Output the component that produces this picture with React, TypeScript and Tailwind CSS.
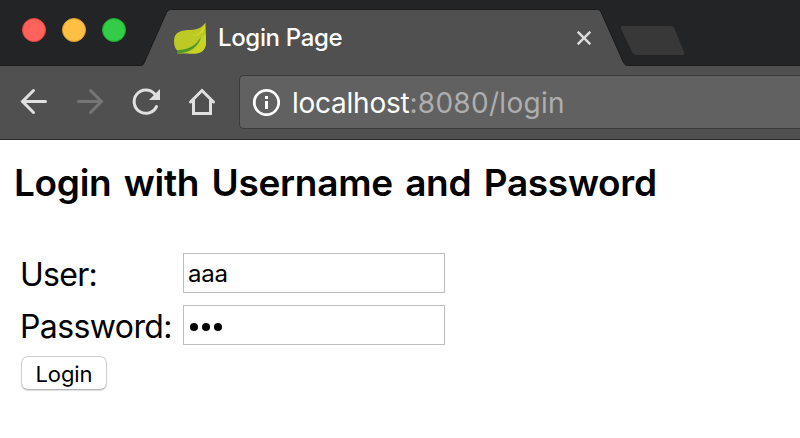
import React from "react";

function TabShape() {
  return (
    <svg className="absolute left-[136px] top-0 h-[67px] w-[500px]" viewBox="136 0 500 67" fill="none">
      <path d="M136 67V65.5H141Q143 65.5 144 63L166.5 12.500Q168 9.500 170.500 9.500H597.500Q600 9.500 601 12L623.500 62.500Q625 65.500 627.500 65.500H636V67Z" fill="#505050" stroke="#19191a" />
      <path d="M136 66H636V67H136Z" fill="#505050" />
    </svg>
  );
}

function Leaf() {
  return (
    <svg className="h-8 w-8" viewBox="0 0 32 32">
      <path d="M31.500 0.500C28 5.500 24 7.500 17 8C7 8 0 10 0 19C0 24 1.500 27.500 4 29L3.500 31.500H22C29 31 32 26 32 20Z" fill="#bdca25" />
      <path d="M30 3C29 9 24 13 17 14C25 14.500 30 10 31 5Z" fill="#d1db20" />
      <path d="M4 28C15 28 22 23 27 15C25 24 16 31 3.500 31.500Z" fill="#4f972c" />
      <path d="M14 31.500C21 28 25 23 28 15C30 14 32 12 32 12V20C32 26 29 31 22 31.500Z" fill="#c9d322" />
    </svg>
  );
}

function TabStrip() {
  return (
    <div className="relative flex h-[66px] shrink-0 border-b border-[#19191a] bg-[#222426]">
      <TabShape />
      <div className="flex w-[174px] shrink-0 gap-4 pl-[22px] pt-[18px]">
        <span className="h-6 w-6 rounded-full border border-[#e2463f] bg-[#ff625c]" />
        <span className="h-6 w-6 rounded-full border border-[#e0a030] bg-[#ffbf42]" />
        <span className="h-6 w-6 rounded-full border border-[#1dab2c] bg-[#33cc48]" />
      </div>
      <div className="relative flex w-[447px] pt-[22px]">
        <Leaf />
        <span className="ml-3 h-8 whitespace-nowrap text-[24px] font-medium leading-8 tracking-[-0.35px] text-white">Login Page</span>
        <svg className="absolute left-[403px] top-[31px] h-[14px] w-[14px]" viewBox="0 0 14 14" stroke="#dddddd" strokeWidth="2.400">
          <path d="M.7.7 13.300 13.300M13.300.7.7 13.300" />
        </svg>
      </div>
      <svg className="mt-[25px] h-[31px] w-16" viewBox="0 0 64 31">
        <path d="M2 1H50Q52.500 1 53.500 3.500L63 27Q64 30 61.500 30H15Q12.500 30 11 27L0 4Q-1 1 2 1Z" fill="#383838" />
      </svg>
    </div>
  );
}

function Toolbar() {
  return (
    <div className="flex h-[74px] shrink-0 border-b border-[#292929] bg-[#505050]">
      <svg className="h-[73px] w-[239px] shrink-0" viewBox="0 66 239 73" fill="none" stroke="#e0e0e0" strokeWidth="3" strokeLinecap="round">
        <path d="M33.500 90.500 22.500 101.500 33.500 112.500M22.500 101.500H45.500" />
        <path d="M90.500 90.500 101.500 101.500 90.500 112.500M101.500 101.500H78.500" stroke="#767676" />
        <path d="M154.500 93.700A11.700 11.700 0 1 0 156.500 106.500" />
        <path d="M160 89V100H149Z" fill="#e0e0e0" stroke="none" />
        <path d="M190.500 102 202 90.500 213.500 102M193.500 100V113.500H210.500V100" />
      </svg>
      <div className="mt-[9px] flex h-[54px] flex-1 items-center rounded-l-[5px] border border-r-0 border-[#3b3b3b] bg-[#616161] pl-3">
        <svg className="h-7 w-7 shrink-0" viewBox="0 0 28 28" fill="none">
          <circle cx="14.500" cy="14.500" r="12.200" stroke="white" strokeWidth="2.800" />
          <path d="M13 8H16V11H13ZM13 13H16V21H13Z" fill="white" />
        </svg>
        <span className="ml-3 mt-[2px] whitespace-nowrap text-[28px] leading-9 tracking-[0.3px] text-[#aeaeae]">
          <span className="tracking-[-0.25px] text-white">localhost</span>:8080/login
        </span>
      </div>
    </div>
  );
}

export default function App() {
  return (
    <div className="flex h-[438px] w-[800px] flex-col overflow-hidden bg-white font-['Inter',sans-serif] text-black">
      <TabStrip />
      <Toolbar />
      <main className="flex flex-col">
        <h3 className="ml-[14px] mt-[20px] h-[46px] whitespace-nowrap text-[37px] font-semibold leading-[46px] tracking-[-0.3px] [word-spacing:3.4px]">Login with Username and Password</h3>
        <form className="mt-[47px] flex flex-col items-start pl-5" onSubmit={(e) => e.preventDefault()}>
          <div className="flex h-10 items-center">
            <label className="w-[163px] whitespace-nowrap pt-1 text-[32px] leading-10 tracking-[-0.7px]">User:</label>
            <input defaultValue="aaa" className="h-10 w-[262px] border border-[#bdbdbd] px-1 text-[24px] tracking-[-0.2px] outline-none" />
          </div>
          <div className="mt-3 flex h-10 items-center">
            <label className="w-[163px] whitespace-nowrap pt-1 text-[32px] leading-10 tracking-[-0.6px]">Password:</label>
            <div className="flex h-10 w-[262px] items-center gap-1 border border-[#bdbdbd] pl-[6px] pt-[3px]">
              <span className="h-2 w-2 rounded-full bg-black" />
              <span className="h-2 w-2 rounded-full bg-black" />
              <span className="h-2 w-2 rounded-full bg-black" />
            </div>
          </div>
          <button className="ml-px mt-[11px] h-[34px] w-[86px] whitespace-nowrap rounded-[7px] border border-[#cfcfcf] border-b-[#b5b5b5] bg-white pt-px text-[22px] leading-8 tracking-[-0.1px] shadow-[0_1px_1px_#dddddd]">Login</button>
        </form>
      </main>
    </div>
  );
}
